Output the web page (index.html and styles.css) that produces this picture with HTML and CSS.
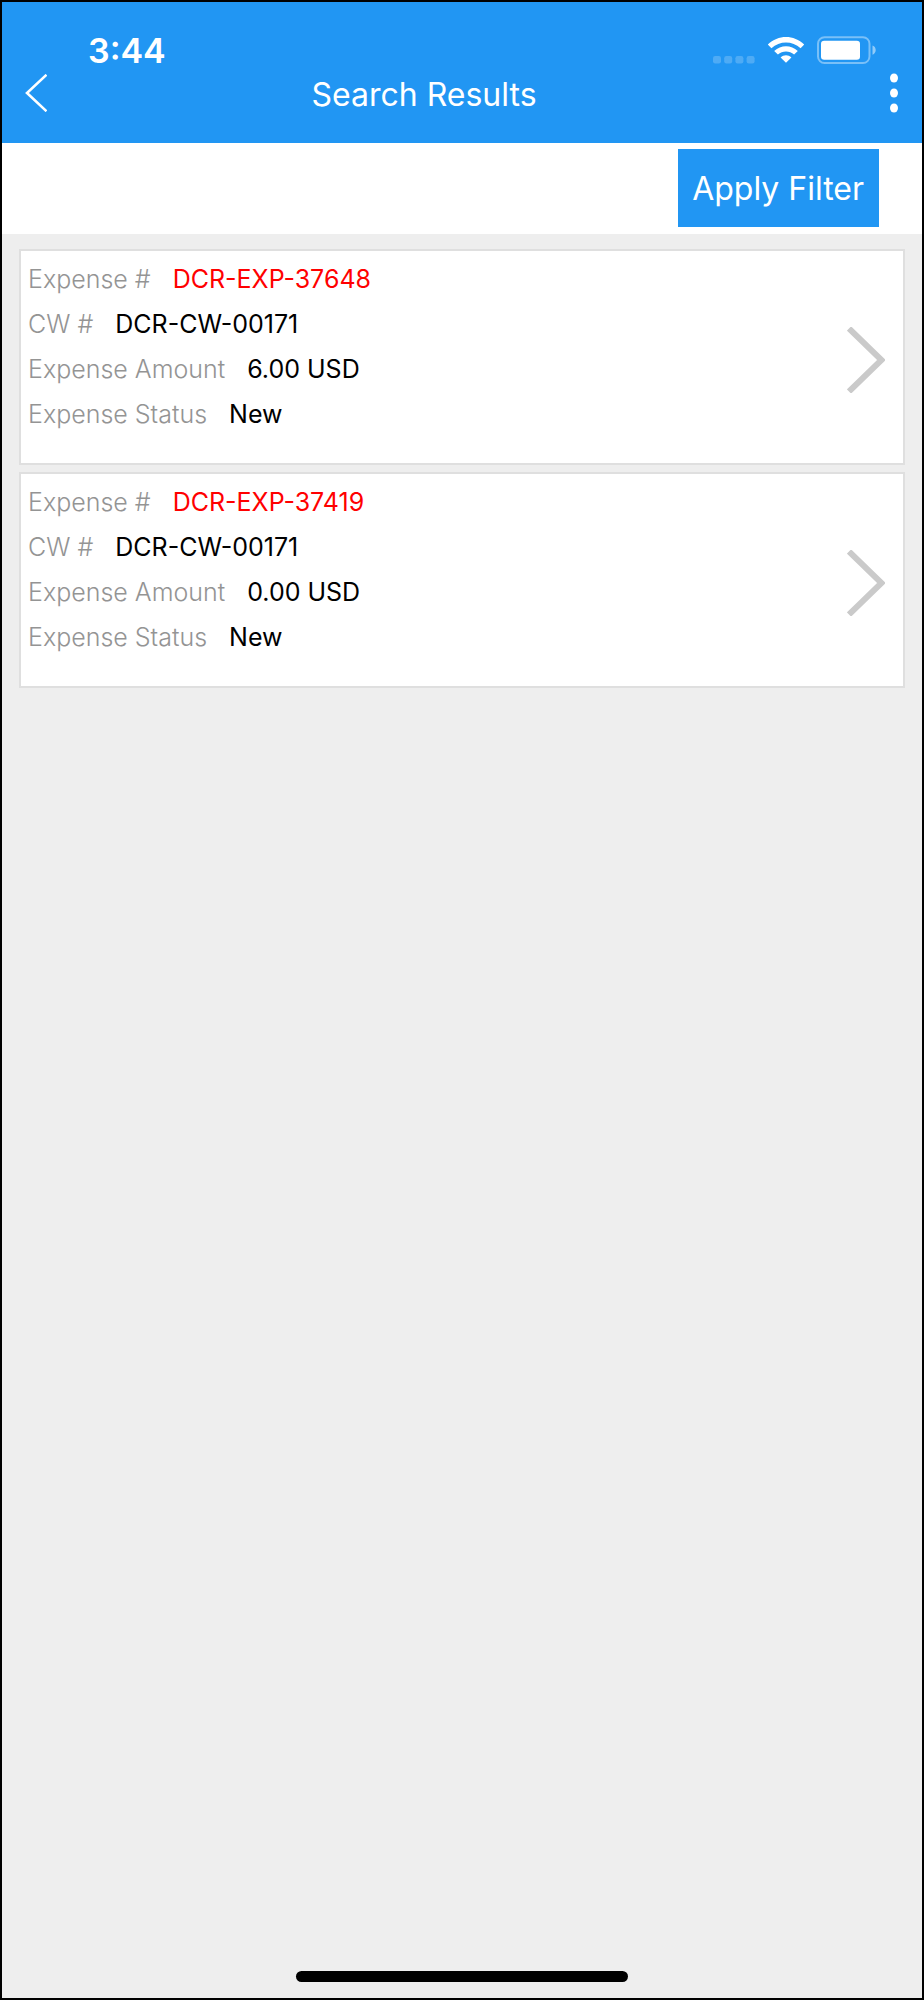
FILE: index.html
```html
<!DOCTYPE html>
<html lang="en">
<head>
<meta charset="utf-8">
<meta name="viewport" content="width=device-width, initial-scale=1">
<title>Search Results</title>
<link rel="stylesheet" href="styles.css">
</head>
<body>
<div class="screen">
  <header class="header">
    <div class="status-bar">
      <time class="clock">3:44</time>
      <div class="status-icons">
        <svg class="signal" width="42" height="8" viewBox="0 0 42 8" aria-hidden="true">
          <rect x="0" y="0" width="8" height="7.5" rx="2.2"/><rect x="11.2" y="0" width="8" height="7.5" rx="2.2"/><rect x="22.4" y="0" width="8" height="7.5" rx="2.2"/><rect x="33.6" y="0" width="8" height="7.5" rx="2.2"/>
        </svg>
        <svg class="wifi" width="38" height="28" viewBox="0 0 38 28" aria-hidden="true">
          <path d="M.8 8.6C11 -1.4 27 -1.4 37.2 8.6L33.6 12.2C25.4 4.6 12.6 4.6 4.4 12.2Z"/>
          <path d="M7.2 14.9C13.8 8.6 24.2 8.6 30.8 14.9L27.1 18.6C22.5 14.5 15.5 14.5 10.9 18.6Z"/>
          <path d="M13.6 21.4C16.7 18.6 21.3 18.6 24.4 21.4L19 26.8Z"/>
        </svg>
        <svg class="battery" width="60" height="28" viewBox="0 0 60 28" aria-hidden="true">
          <rect class="battery-shell" x="1" y="1.2" width="51.5" height="25.8" rx="6.5"/>
          <path class="battery-tip" d="M55.5 9.5C59.8 11 59.8 17 55.5 18.8Z"/>
          <rect x="4" y="4.8" width="39" height="19" rx="3.2"/>
        </svg>
      </div>
    </div>
    <nav class="nav">
      <button class="icon-button" type="button" aria-label="Back">
        <svg width="22" height="38" viewBox="0 0 22 38" aria-hidden="true"><path class="back-line" d="M21.5 .8L2 19L21.5 37.2"/></svg>
      </button>
      <h1 class="title">Search Results</h1>
      <button class="icon-button" type="button" aria-label="More options">
        <svg class="more" width="8" height="40" viewBox="0 0 8 40" aria-hidden="true"><ellipse cx="4" cy="5" rx="4" ry="4.6"/><ellipse cx="4" cy="20" rx="4" ry="4.6"/><ellipse cx="4" cy="35" rx="4" ry="4.6"/></svg>
      </button>
    </nav>
  </header>
  <div class="toolbar">
    <button class="filter" type="button">Apply Filter</button>
  </div>
  <main class="results">
    <a class="card" href="#37648">
      <dl class="fields">
        <div class="field"><dt>Expense #</dt><dd class="number">DCR-EXP-37648</dd></div>
        <div class="field"><dt>CW #</dt><dd>DCR-CW-00171</dd></div>
        <div class="field"><dt>Expense Amount</dt><dd>6.00 USD</dd></div>
        <div class="field"><dt>Expense Status</dt><dd>New</dd></div>
      </dl>
      <svg class="chevron" width="38" height="66" viewBox="0 0 38 66" aria-hidden="true"><path d="M2 1.5L34.5 33L2 64.5"/></svg>
    </a>
    <a class="card" href="#37419">
      <dl class="fields">
        <div class="field"><dt>Expense #</dt><dd class="number">DCR-EXP-37419</dd></div>
        <div class="field"><dt>CW #</dt><dd>DCR-CW-00171</dd></div>
        <div class="field"><dt>Expense Amount</dt><dd>0.00 USD</dd></div>
        <div class="field"><dt>Expense Status</dt><dd>New</dd></div>
      </dl>
      <svg class="chevron" width="38" height="66" viewBox="0 0 38 66" aria-hidden="true"><path d="M2 1.5L34.5 33L2 64.5"/></svg>
    </a>
  </main>
  <div class="home-indicator"></div>
</div>
</body>
</html>
```
FILE: styles.css
```css
* { box-sizing: border-box; }

body {
  margin: 0;
  font-family: Inter, "Liberation Sans", sans-serif;
}

button {
  border: 0;
  padding: 0;
  background: none;
  color: inherit;
  font: inherit;
  cursor: pointer;
}

svg { display: block; }

.screen {
  display: flex;
  flex-direction: column;
  min-height: 100vh;
  border: 2px solid #000;
  background: #eee;
}

.header {
  padding: 30px 24px 25px 23px;
  background: #2196f3;
  color: #fff;
}

.status-bar {
  display: flex;
  justify-content: space-between;
  align-items: center;
  height: 36px;
  padding: 0 21px 0 63px;
}

.clock {
  padding-top: 1px;
  font-size: 34px;
  font-weight: 600;
  line-height: 36px;
}

.status-icons {
  display: flex;
  align-items: flex-end;
  gap: 12px;
  fill: #fff;
}

.signal { opacity: 0.2; }

.battery-shell {
  fill: none;
  stroke: #fff;
  stroke-width: 2;
  opacity: 0.4;
}

.battery-tip { opacity: 0.5; }

.nav {
  display: flex;
  justify-content: space-between;
  align-items: center;
  height: 50px;
}

.icon-button {
  display: flex;
  align-items: center;
  height: 50px;
}

.back-line {
  fill: none;
  stroke: #fff;
  stroke-width: 2.6;
}

.more { fill: #fff; }

.title {
  flex: 1;
  margin: 0;
  padding: 3px 89px 0 0;
  font-size: 32px;
  font-weight: 400;
  line-height: 50px;
  text-align: center;
}

.toolbar {
  display: flex;
  justify-content: flex-end;
  padding: 6px 43px 7px;
  background: #fff;
}

.filter {
  padding: 1px 15px 0 14px;
  background: #2196f3;
  color: #fff;
  font-size: 32px;
  font-weight: 400;
  line-height: 77px;
}

.results {
  display: flex;
  flex: 1;
  flex-direction: column;
  gap: 7px;
  padding: 15px 17px;
}

.card {
  display: flex;
  justify-content: space-between;
  align-items: center;
  padding: 6px 18px 26px 7px;
  border: 2px solid #dfdfdf;
  background: #fff;
  color: #000;
  text-decoration: none;
}

.fields { margin: 0; }

.field {
  display: flex;
  gap: 22px;
  font-size: 25px;
  line-height: 45px;
}

.field dt {
  color: #949494;
  font-weight: 300;
}

.field dd { margin: 0; }

.field .number { color: #f00; }

.chevron {
  margin-top: 26px;
  fill: none;
  stroke: #cacaca;
  stroke-width: 6;
}

.home-indicator {
  width: 36%;
  height: 11px;
  margin: 0 auto 16px;
  border-radius: 6px;
  background: #000;
}
```
